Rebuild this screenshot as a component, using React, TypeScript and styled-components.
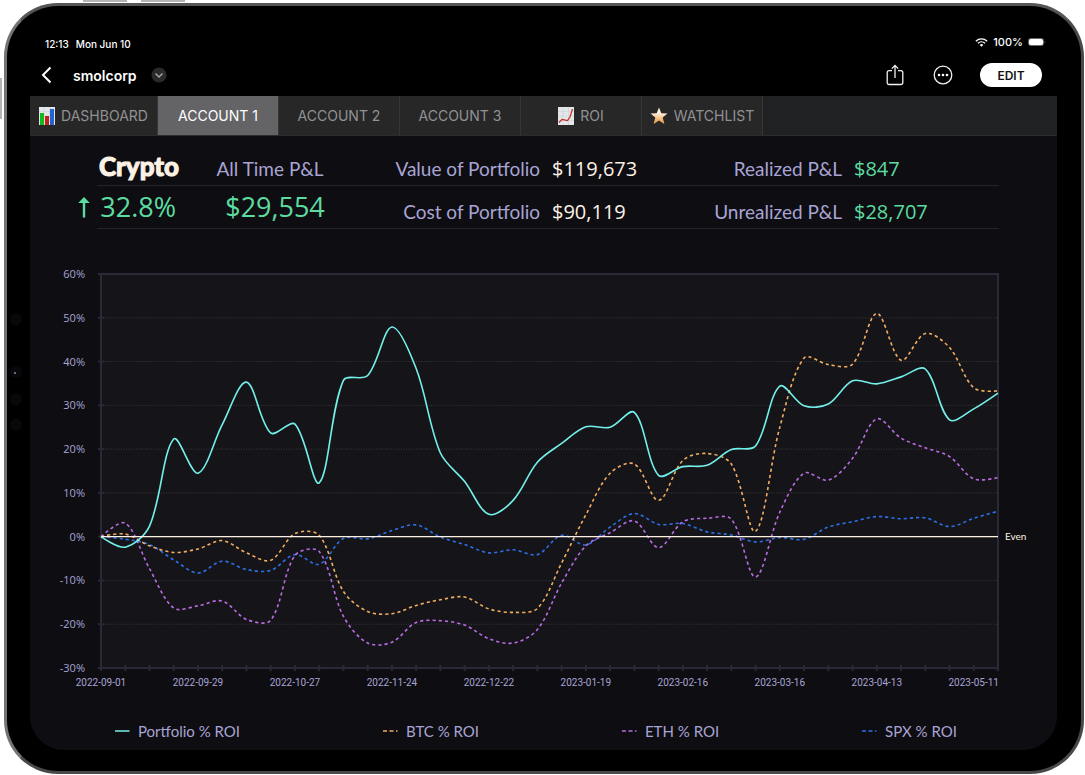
import React, { useState } from "react";
import styled, { createGlobalStyle } from "styled-components";

const GlobalStyle = createGlobalStyle`
  *, *::before, *::after { box-sizing: border-box; }
  body { margin: 0; background: #fff; }
  button { font: inherit; color: inherit; border: 0; background: none; padding: 0; margin: 0; cursor: pointer; }
  h1, p, dl, dt, dd, ul { margin: 0; padding: 0; }
`;

const brand = 'Lato, "Noto Sans", sans-serif';
const numeric = '"Open Sans", "Noto Sans", sans-serif';
const system = 'Inter, "Liberation Sans", sans-serif';

const colors = {
  screen: "#0e0d12",
  plot: "#151519",
  axis: "#292938",
  lilac: "#a8a4d4",
  cream: "#fdf1e4",
  green: "#5cdca0",
  cyan: "#74f0ea",
  orange: "#f3ad60",
  purple: "#b96be2",
  blue: "#2b70e6",
};

const Stage = styled.div`
  position: relative;
  padding: 3px 1px 1px 4px;
`;

const SideKey = styled.span<{ $x: number; $y: number; $w: number; $h: number }>`
  position: absolute;
  left: ${(p) => p.$x}px;
  top: ${(p) => p.$y}px;
  width: ${(p) => p.$w}px;
  height: ${(p) => p.$h}px;
  background: #b4b4b4;
`;

const Device = styled.div`
  position: relative;
  background: #000;
  border: 3px solid;
  border-color: #555557 #49494b #49494b #747476;
  border-radius: 54px;
  padding: 28px 24px 21px 23px;
  font-family: ${system};
  color: #fff;
`;

const Sensor = styled.span<{ $y: number }>`
  position: absolute;
  left: 3px;
  top: ${(p) => p.$y}px;
  width: 12px;
  height: 12px;
  border-radius: 50%;
  background: #08080a;
`;

const Lens = styled(Sensor)`
  &::after {
    content: "";
    position: absolute;
    left: 4px;
    top: 6px;
    width: 2px;
    height: 2px;
    border-radius: 50%;
    background: #8a8aa8;
  }
`;

const StatusBar = styled.div`
  display: flex;
  justify-content: space-between;
  padding: 0 11px 0 15px;
  height: 18px;
  font-size: 10px;
  line-height: 16px;
  font-weight: 500;
`;

const StatusGroup = styled.div<{ $gap: number; $drop?: boolean }>`
  display: flex;
  align-items: center;
  gap: ${(p) => p.$gap}px;
  height: 16px;
  margin-top: ${(p) => (p.$drop ? 2 : 0)}px;
`;

const Charge = styled.span`
  font-size: 11px;
`;

const Toolbar = styled.header`
  display: flex;
  align-items: center;
  height: 44px;
  padding: 3px 15px 1px 10px;
`;

const IconButton = styled.button`
  display: flex;
  align-items: center;
  justify-content: center;
`;

const DocName = styled.h1`
  font-size: 14px;
  line-height: 20px;
  font-weight: 600;
  margin: 2px 14px 0 20px;
`;

const Actions = styled.div`
  display: flex;
  align-items: center;
  gap: 28px;
  margin-left: auto;
`;

const EditButton = styled.button`
  width: 62px;
  height: 24px;
  border-radius: 12px;
  background: #fff;
  color: #111;
  font-size: 12px;
  font-weight: 600;
  margin-left: -1px;
`;

const TabBar = styled.nav`
  display: flex;
  height: 40px;
  background: #202123;
  border-bottom: 1px solid #2c2c2e;
`;

const Tab = styled.button<{ $active: boolean; $wide?: boolean }>`
  display: flex;
  align-items: center;
  justify-content: center;
  gap: 6px;
  width: ${(p) => (p.$wide ? 128 : 121)}px;
  height: 39px;
  border-right: 1px solid #363638;
  background: ${(p) => (p.$active ? "#646466" : "#272728")};
  color: ${(p) => (p.$active ? "#fff" : "#929294")};
  font-family: ${system};
  font-size: 14px;
  white-space: nowrap;
`;

const Screen = styled.main`
  background: ${colors.screen};
  border-radius: 0 0 34px 34px;
  overflow: hidden;
  font-family: ${brand};
  color: ${colors.lilac};
`;

const Summary = styled.section`
  padding: 0 58px 0 67px;
`;

const SummaryRow = styled.div<{ $first?: boolean }>`
  display: grid;
  grid-template-columns:
    minmax(0, 84fr) minmax(0, 178fr) minmax(0, 181fr)
    minmax(0, 121fr) minmax(0, 181fr) minmax(0, 157fr);
  align-items: center;
  height: ${(p) => (p.$first ? 50 : 43)}px;
  padding-top: ${(p) => (p.$first ? 16 : 0)}px;
  border-bottom: 1px solid #24242a;
  white-space: nowrap;
`;

const Title = styled.h2`
  margin: 0;
  padding-bottom: 6px;
  font-size: 26px;
  line-height: 28px;
  font-weight: 900;
  -webkit-text-stroke: 1px ${colors.cream};
  text-align: center;
  color: ${colors.cream};
`;

const Caption = styled.span`
  font-size: 19px;
  line-height: 24px;
  text-align: center;
`;

const Headline = styled.strong`
  display: flex;
  align-items: center;
  justify-content: center;
  font-family: ${numeric};
  font-size: 27px;
  line-height: 32px;
  font-weight: 400;
  color: ${colors.green};
  padding-left: 10px;
`;

const Change = styled(Headline)`
  justify-content: flex-end;
  gap: 10px;
  padding: 0 5px 0 0;

  svg { flex: none; }
`;

const Label = styled.span<{ $low?: boolean }>`
  font-size: 19px;
  line-height: 24px;
  text-align: right;
  padding-top: ${(p) => (p.$low ? 10 : 0)}px;
`;

const Amount = styled.span<{ $gain?: boolean; $low?: boolean }>`
  font-family: ${numeric};
  font-size: 20px;
  line-height: 24px;
  font-weight: 500;
  padding: ${(p) => (p.$low ? 10 : 0)}px 0 0 12px;
  color: ${(p) => (p.$gain ? colors.green : colors.cream)};
`;

const Chart = styled.svg`
  display: block;
  width: 100%;
  height: auto;
  margin-top: 11px;
`;

const Legend = styled.ul`
  display: flex;
  justify-content: space-between;
  list-style: none;
  && { padding: 21px 100px 9px 85px; }
`;

const LegendItem = styled.li`
  display: flex;
  align-items: center;
  gap: 8px;
  font-size: 15px;
  line-height: 20px;
  white-space: nowrap;
`;

/* Chart geometry, in viewBox units */
const plot = { left: 71, right: 968, top: 34, bottom: 428 };
const count = 38;
const step = (plot.right - plot.left) / (count - 1);
const xAt = (i: number) => plot.left + i * step;
const yAt = (v: number) =>
  plot.top + ((60 - v) / 90) * (plot.bottom - plot.top);

const series = [
  {
    name: "SPX % ROI",
    color: colors.blue,
    dashed: true,
    values: [0, -0.6, -1.8, -5.3, -8.3, -5.6, -7.5, -7.7, -4.1, -6.3, -0.4, -0.5, 1.4, 2.7, -0.1, -1.8, -3.7, -3, -4.1, 0.3, -1.9, 2.2, 5.3, 2.8, 3, 1.1, 0.4, -1.2, -0.2, -0.6, 2.2, 3.4, 4.6, 4.1, 4.3, 2.3, 4.2, 5.8],
  },
  {
    name: "ETH % ROI",
    color: colors.purple,
    dashed: true,
    values: [0, 3.1, -7.3, -16.3, -15.8, -14.7, -18.9, -19.1, -4.3, -3.4, -18.2, -24.3, -24.1, -19.6, -19.2, -20.2, -23.3, -24.3, -21.2, -10.6, -2.1, 0.9, 3.6, -2.5, 3.4, 4.2, 4, -9.2, 5.6, 14.5, 12.9, 17.9, 26.9, 22.5, 20.3, 18.3, 13.2, 13.5],
  },
  {
    name: "BTC % ROI",
    color: colors.orange,
    dashed: true,
    values: [0, 0.6, -2.1, -3.6, -2.8, -0.9, -3.7, -5.4, 0.7, 0.3, -12.5, -17.1, -17.6, -15.7, -14.4, -13.8, -16.5, -17.3, -16.4, -6, 5, 14.5, 16.6, 8.3, 17.4, 19, 16.6, 1.2, 25, 40.8, 39.3, 39.4, 51, 40.3, 46.4, 43.2, 34, 33.3],
  },
  {
    name: "Portfolio % ROI",
    color: colors.cyan,
    dashed: false,
    values: [0, -2.4, 2.4, 22.3, 14.5, 25.6, 35.3, 23.7, 25.7, 12.3, 35.7, 36.8, 47.9, 38.4, 19.1, 12.6, 5.1, 8.3, 17, 21.3, 25.1, 25, 28.4, 14, 16, 16.3, 19.9, 20.7, 34.4, 29.9, 30.3, 35.6, 34.9, 36.5, 38.3, 26.7, 29.2, 32.8],
  },
];

const dates = ["2022-09-01", "2022-09-29", "2022-10-27", "2022-11-24", "2022-12-22", "2023-01-19", "2023-02-16", "2023-03-16", "2023-04-13", "2023-05-11"];
const levels = [60, 50, 40, 30, 20, 10, 0, -10, -20, -30];

/* Spline whose handles are shared out by the lengths of the two segments
   that meet at a point, so a short flat stretch beside a steep one stays flat */
const smoothness = 0.33;
function smoothPath(values: number[]) {
  const pts = values.map((v, i) => ({ x: xAt(i), y: yAt(v) }));
  const handles = pts.map((p, i) => {
    const prev = pts[i - 1];
    const next = pts[i + 1];
    if (!prev || !next) return { before: p, after: p };
    const lp = Math.hypot(p.x - prev.x, p.y - prev.y);
    const ln = Math.hypot(next.x - p.x, next.y - p.y);
    const kp = (smoothness * lp) / (lp + ln);
    const kn = (smoothness * ln) / (lp + ln);
    const vx = next.x - prev.x;
    const vy = next.y - prev.y;
    return {
      before: { x: p.x - vx * kp, y: p.y - vy * kp },
      after: { x: p.x + vx * kn, y: p.y + vy * kn },
    };
  });
  const at = (p: { x: number; y: number }) => `${p.x.toFixed(2)} ${p.y.toFixed(2)}`;
  return pts
    .map((p, i) =>
      i === 0
        ? `M${at(p)}`
        : `C${at(handles[i - 1].after)} ${at(handles[i].before)} ${at(p)}`
    )
    .join("");
}

const BarsIcon = () => (
  <svg width="16" height="18" viewBox="0 0 16 18" aria-hidden="true">
    <rect width="16" height="18" fill="#e3e7ea" />
    <path d="M0 4.500h16M0 9h16M0 13.500h16M5 0v18M10.500 0v18" stroke="#c8d0d6" strokeWidth="0.600" />
    <rect x="1" y="6" width="4" height="12" fill="#11b91c" />
    <rect x="6" y="9" width="4" height="9" fill="#c41f1b" />
    <rect x="11" y="2" width="4" height="16" fill="#2563cf" />
  </svg>
);

const TrendIcon = () => (
  <svg width="16" height="18" viewBox="0 0 16 18" aria-hidden="true">
    <rect width="16" height="18" fill="#e3e7ea" />
    <path d="M0 4.500h16M0 9h16M0 13.500h16M5 0v18M10.500 0v18" stroke="#c8d0d6" strokeWidth="0.600" />
    <path d="M1 15.500 4 12.300l5.500 1.200L12 10l2.500-8" fill="none" stroke="#c9271b" strokeWidth="1.200" />
  </svg>
);

const StarIcon = () => (
  <svg width="18" height="18" viewBox="0 0 18 18" aria-hidden="true">
    <defs>
      <linearGradient id="star" x1="0" y1="0" x2="0" y2="1">
        <stop offset="0.350" stopColor="#fdeedd" />
        <stop offset="0.800" stopColor="#f4ab62" />
      </linearGradient>
    </defs>
    <path d="M9 .5l2.300 5.700 6.200.3-4.800 4.100 1.700 6.300L9 13.600l-5.400 3.300 1.700-6.300L.5 6.500l6.200-.3z" fill="url(#star)" />
  </svg>
);

const tabs: { label: string; icon?: React.ReactNode }[] = [
  { label: "DASHBOARD", icon: <BarsIcon /> },
  { label: "ACCOUNT 1" },
  { label: "ACCOUNT 2" },
  { label: "ACCOUNT 3" },
  { label: "ROI", icon: <TrendIcon /> },
  { label: "WATCHLIST", icon: <StarIcon /> },
];

const PerformanceChart = () => (
  <Chart viewBox="0 0 1027 460" role="img" aria-label="Return on investment over time">
    <rect x={plot.left} y={plot.top} width={plot.right - plot.left} height={plot.bottom - plot.top} fill={colors.plot} />
    {levels.slice(1, -1).map((v) => (
      <line key={v} x1={plot.left} x2={plot.right} y1={yAt(v)} y2={yAt(v)} stroke="#38383c" strokeDasharray="1 1.500" />
    ))}
    <g stroke={colors.axis} strokeWidth="2" fill="none">
      <rect x={plot.left} y={plot.top} width={plot.right - plot.left} height={plot.bottom - plot.top} />
      {levels.map((v) => (
        <line key={v} x1={plot.left - 3} x2={plot.left + 3} y1={yAt(v)} y2={yAt(v)} />
      ))}
      {Array.from({ length: count }, (_, i) => (
        <line key={i} x1={xAt(i)} x2={xAt(i)} y1={plot.bottom - 3} y2={plot.bottom + 3} />
      ))}
    </g>
    {series.map((s) => (
      <path key={s.name} d={smoothPath(s.values)} fill="none" stroke={s.color} strokeWidth="1.600" strokeDasharray={s.dashed ? "3.200 3" : undefined} />
    ))}
    <line x1={plot.left} x2={plot.right} y1={yAt(0)} y2={yAt(0)} stroke={colors.cream} strokeWidth="1.200" />
    <g fill={colors.lilac} fontFamily={numeric} fontSize="11" textAnchor="end">
      {levels.map((v) => (
        <text key={v} x="55" y={yAt(v) + 4}>{`${v}%`}</text>
      ))}
    </g>
    <g fill={colors.lilac} fontFamily="Roboto, sans-serif" fontSize="10" textAnchor="middle">
      {dates.map((d, i) => (
        <text key={d} x={xAt(i * 4)} y="446">{d}</text>
      ))}
    </g>
    <text x="975" y={yAt(0) + 3} fill={colors.cream} fontSize="10">Even</text>
  </Chart>
);

export default function App() {
  const [active, setActive] = useState("ACCOUNT 1");
  return (
    <Stage>
      <GlobalStyle />
      <SideKey $x={83} $y={0} $w={44} $h={2} />
      <SideKey $x={141} $y={0} $w={44} $h={2} />
      <SideKey $x={0} $y={78} $w={2} $h={41} />
      <Device>
        <Sensor $y={307} />
        <Lens $y={360} />
        <Sensor $y={387} />
        <Sensor $y={413} />
        <StatusBar>
          <StatusGroup $gap={7} $drop>
            <span>12:13</span>
            <span>Mon Jun 10</span>
          </StatusGroup>
          <StatusGroup $gap={5}>
            <svg width="13" height="9" viewBox="0 0 13 9" aria-hidden="true">
              <g fill="none" stroke="#fff" strokeWidth="1.400">
                <path d="M.9 3.200a8 8 0 0 1 11.200 0" />
                <path d="M3 5.300a5 5 0 0 1 7 0" />
              </g>
              <path d="M4.700 6.900a2.600 2.600 0 0 1 3.600 0L6.500 8.800z" fill="#fff" />
            </svg>
            <Charge>100%</Charge>
            <svg width="18" height="8" viewBox="0 0 18 8" aria-hidden="true">
              <rect x=".5" y=".5" width="15" height="7" rx="2" fill="none" stroke="#6a6a6a" />
              <rect x="1" y="1" width="14" height="6" rx="1.500" fill="#fff" />
              <path d="M16.700 2.800v2.400c.9-.3.900-2.100 0-2.400z" fill="#6a6a6a" />
            </svg>
          </StatusGroup>
        </StatusBar>
        <Toolbar>
          <IconButton aria-label="Back">
            <svg width="13" height="18" viewBox="0 0 13 18" aria-hidden="true">
              <path d="M10.500 1.500 3 9l7.500 7.500" fill="none" stroke="#fff" strokeWidth="2" />
            </svg>
          </IconButton>
          <DocName>smolcorp</DocName>
          <IconButton aria-label="Document menu">
            <svg width="16" height="16" viewBox="0 0 16 16" aria-hidden="true">
              <circle cx="8" cy="8" r="7.500" fill="#2a2a2c" />
              <path d="M4.500 6.500 8 10l3.500-3.500" fill="none" stroke="#a4a4a6" strokeWidth="1.500" />
            </svg>
          </IconButton>
          <Actions>
            <IconButton aria-label="Share">
              <svg width="20" height="22" viewBox="0 0 20 22" aria-hidden="true">
                <g fill="none" stroke="#f2f2f2" strokeWidth="1.300">
                  <path d="M7 6.700H4A1.800 1.800 0 0 0 2.200 8.500v10.200A1.800 1.800 0 0 0 4 20.500h12a1.800 1.800 0 0 0 1.800-1.800V8.500A1.800 1.800 0 0 0 16 6.700h-3" />
                  <path d="M10 14V1.500M6.800 4.600 10 1.400l3.200 3.200" />
                </g>
              </svg>
            </IconButton>
            <IconButton aria-label="More">
              <svg width="20" height="20" viewBox="0 0 20 20" aria-hidden="true">
                <circle cx="10" cy="10" r="8.800" fill="none" stroke="#f2f2f2" strokeWidth="1.300" />
                <g fill="#fff">
                  <circle cx="6" cy="10" r="1.300" />
                  <circle cx="10" cy="10" r="1.300" />
                  <circle cx="14" cy="10" r="1.300" />
                </g>
              </svg>
            </IconButton>
            <EditButton>EDIT</EditButton>
          </Actions>
        </Toolbar>
        <TabBar>
          {tabs.map((t, i) => (
            <Tab key={t.label} $active={t.label === active} $wide={i === 0} onClick={() => setActive(t.label)}>
              {t.icon}
              {t.label}
            </Tab>
          ))}
        </TabBar>
        <Screen>
          <Summary>
            <SummaryRow $first>
              <Title>Crypto</Title>
              <Caption>All Time P&amp;L</Caption>
              <Label>Value of Portfolio</Label>
              <Amount>$119,673</Amount>
              <Label>Realized P&amp;L</Label>
              <Amount $gain>$847</Amount>
            </SummaryRow>
            <SummaryRow>
              <Change>
                <svg width="12" height="21" viewBox="0 0 12 21" aria-label="Up" role="img">
                  <path d="M6 20.500V3" stroke={colors.green} strokeWidth="2.400" />
                  <path d="M6 0 11.800 6H.2z" fill={colors.green} />
                </svg>
                32.8%
              </Change>
              <Headline>$29,554</Headline>
              <Label $low>Cost of Portfolio</Label>
              <Amount $low>$90,119</Amount>
              <Label $low>Unrealized P&amp;L</Label>
              <Amount $gain $low>$28,707</Amount>
            </SummaryRow>
          </Summary>
          <PerformanceChart />
          <Legend>
            {[...series].reverse().map((s) => (
              <LegendItem key={s.name}>
                <svg width="15" height="4" viewBox="0 0 15 4" aria-hidden="true">
                  <path d="M0 2h14.500" stroke={s.color} strokeWidth="1.700" strokeDasharray={s.dashed ? "4 2.500" : undefined} />
                </svg>
                {s.name}
              </LegendItem>
            ))}
          </Legend>
        </Screen>
      </Device>
    </Stage>
  );
}
